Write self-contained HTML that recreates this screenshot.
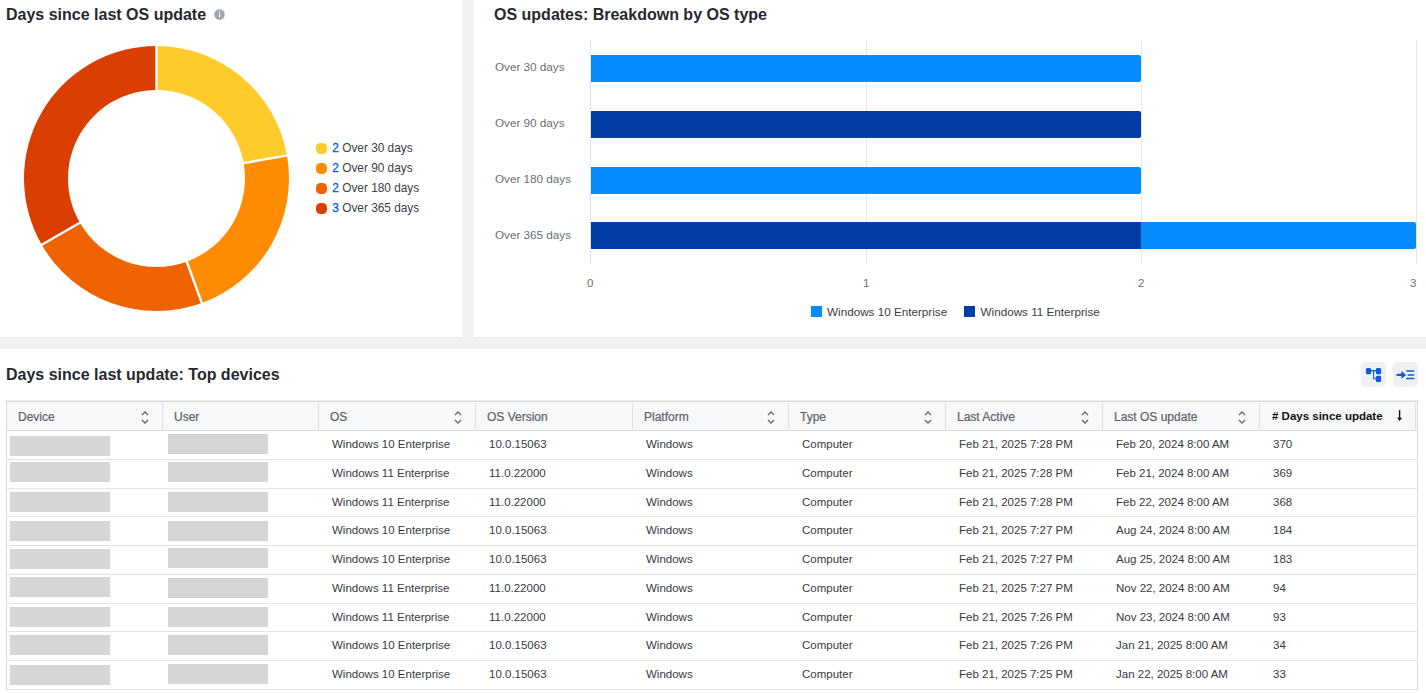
<!DOCTYPE html>
<html><head><meta charset="utf-8"><style>
*{box-sizing:border-box}
html,body{margin:0;padding:0;width:1426px;height:693px;overflow:hidden;background:#fff;font-family:"Liberation Sans",sans-serif}
.a,.abs{position:absolute}
.gray{background:#f0f1f3;position:absolute}
h2{margin:0;font-size:16px;font-weight:700;color:#26292e;position:absolute;white-space:nowrap;line-height:20px}
.leg{position:absolute;left:315.5px;padding-left:16.8px;font-size:11.85px;color:#3a3e45;line-height:20px;white-space:nowrap}
.leg .dot{position:absolute;left:0;top:4.6px;width:11.4px;height:11.4px;border-radius:4.5px}
.leg b{font-weight:400;color:#0b5cd5;-webkit-text-stroke:0.3px #0b5cd5}
.yl{position:absolute;left:495px;font-size:11.7px;color:#6a6f76;white-space:nowrap;line-height:14px}
.tk{position:absolute;top:276px;font-size:11.5px;color:#6a6f76;line-height:14px}
.bar{position:absolute;height:27.5px;border-radius:0 2px 2px 0}
.lb{background:#068cff}
.db{background:#003ea6}
.gl{position:absolute;top:40px;height:224px;width:1px;background:#e6e7eb}
.bl{position:absolute;top:304px;font-size:11.7px;color:#3a3e45;white-space:nowrap;line-height:16px}
.bl i{display:inline-block;width:11px;height:11px;vertical-align:-1px;margin-right:5.5px}
.th{font-size:12px;line-height:14px;color:#5c6168;white-space:nowrap;-webkit-text-stroke:0.2px #5c6168}
.th.act{color:#111;font-weight:700;font-size:11.5px;-webkit-text-stroke:0}
.td{font-size:11.5px;line-height:14px;color:#373a40;white-space:nowrap}
.ph{width:100px;height:20px;background:#d6d6d6}
.btn{position:absolute;top:362px;width:25px;height:25px;border-radius:5px;background:#eef0f3}
</style></head><body>
<div class="gray" style="left:462px;top:0;width:12px;height:337px"></div>
<div class="gray" style="left:0;top:337px;width:1426px;height:12px"></div>

<h2 style="left:6px;top:5px">Days since last OS update</h2>
<svg class="abs" style="left:214px;top:9px" width="11" height="11" viewBox="0 0 11 11"><circle cx="5.5" cy="5.5" r="5.3" fill="#a2a6ad"/><rect x="4.9" y="4.7" width="1.2" height="3.6" fill="#fff"/><circle cx="5.5" cy="3.2" r="0.75" fill="#fff"/></svg>
<svg class="abs" style="left:0;top:0" width="462" height="337"><path d="M156.50,46.00 A132.5,132.5 0 0 1 286.99,155.49 L243.66,163.13 A88.5,88.5 0 0 0 156.50,90.00 Z" fill="#FFCB2B"/>
<path d="M286.99,155.49 A132.5,132.5 0 0 1 201.82,303.01 L186.77,261.66 A88.5,88.5 0 0 0 243.66,163.13 Z" fill="#FF8C00"/>
<path d="M201.82,303.01 A132.5,132.5 0 0 1 41.75,244.75 L79.86,222.75 A88.5,88.5 0 0 0 186.77,261.66 Z" fill="#EE6300"/>
<path d="M41.75,244.75 A132.5,132.5 0 0 1 156.50,46.00 L156.50,90.00 A88.5,88.5 0 0 0 79.86,222.75 Z" fill="#DA3E00"/>
<line x1="156.50" y1="92.00" x2="156.50" y2="44.00" stroke="#fff" stroke-width="2.4"/>
<line x1="241.69" y1="163.48" x2="288.96" y2="155.14" stroke="#fff" stroke-width="2.4"/>
<line x1="186.08" y1="259.78" x2="202.50" y2="304.89" stroke="#fff" stroke-width="2.4"/>
<line x1="81.59" y1="221.75" x2="40.02" y2="245.75" stroke="#fff" stroke-width="2.4"/></svg>
<div class="leg" style="top:138.2px"><span class="dot" style="background:#FFCB2B"></span><b>2</b> Over 30 days</div>
<div class="leg" style="top:158.2px"><span class="dot" style="background:#FF8C00"></span><b>2</b> Over 90 days</div>
<div class="leg" style="top:178.2px"><span class="dot" style="background:#EE6300"></span><b>2</b> Over 180 days</div>
<div class="leg" style="top:198.2px"><span class="dot" style="background:#DA3E00"></span><b>3</b> Over 365 days</div>

<h2 style="left:494px;top:5px">OS updates: Breakdown by OS type</h2>
<div class="gl" style="left:590px;background:#dfe1e5"></div>
<div class="gl" style="left:866px"></div>
<div class="gl" style="left:1141px"></div>
<div class="gl" style="left:1416px"></div>
<div class="bar lb" style="left:591px;top:54.5px;width:550px"></div>
<div class="bar db" style="left:591px;top:110.5px;width:550px"></div>
<div class="bar lb" style="left:591px;top:166.5px;width:550px"></div>
<div class="bar db" style="left:591px;top:221.5px;width:550px;border-radius:0"></div>
<div class="bar lb" style="left:1141px;top:221.5px;width:275px"></div>
<div class="yl" style="top:59.5px">Over 30 days</div>
<div class="yl" style="top:115.5px">Over 90 days</div>
<div class="yl" style="top:171.5px">Over 180 days</div>
<div class="yl" style="top:227.5px">Over 365 days</div>
<div class="tk" style="left:587px">0</div>
<div class="tk" style="left:863px">1</div>
<div class="tk" style="left:1138px">2</div>
<div class="tk" style="left:1410px">3</div>
<div class="bl" style="left:810.5px"><i style="background:#068cff"></i>Windows 10 Enterprise</div>
<div class="bl" style="left:964px"><i style="background:#003ea6"></i>Windows 11 Enterprise</div>

<h2 style="left:6px;top:365px">Days since last update: Top devices</h2>
<div class="btn" style="left:1361px"></div>
<div class="btn" style="left:1392.5px;width:25.5px"></div>
<svg class="abs" style="left:1361px;top:362px" width="25" height="25" viewBox="1361 362 25 25"><rect x="1365.9" y="368.1" width="5.3" height="6.1" rx="1.5" fill="#0b5cd5"/><rect x="1375.8" y="368.1" width="5.3" height="6.1" rx="1.5" fill="#0b5cd5"/><rect x="1375.8" y="375.8" width="5.3" height="6.1" rx="1.5" fill="#0b5cd5"/><path d="M1371 370.6 H1376 M1373.6 370.6 V378.8 H1376" fill="none" stroke="#0b5cd5" stroke-width="1.1"/></svg>
<svg class="abs" style="left:1392px;top:362px" width="26" height="25" viewBox="1392 362 26 25"><path d="M1397.4 374.9 H1403" stroke="#0b5cd5" stroke-width="2.2" stroke-linecap="round"/><path d="M1401.4 371 L1406.2 374.9 L1401.4 378.8 Z" fill="#0b5cd5"/><path d="M1406.8 371 H1413.6 M1408.2 374.9 H1413.6 M1406.8 378.6 H1413.6" stroke="#0b5cd5" stroke-width="1.5" stroke-linecap="round"/></svg>
<div class="a" style="left:6px;top:400px;width:1412px;height:1px;background:#eceef1"></div>
<div class="a" style="left:6px;top:401px;width:1412px;height:1px;background:#d3d6db"></div>
<div class="a" style="left:6px;top:402px;width:1411px;height:28px;background:#f7f8fa"></div>
<div class="a" style="left:6px;top:401px;width:1px;height:289px;background:#d7dade"></div>
<div class="a" style="left:1417px;top:401px;width:1px;height:289px;background:#d7dade"></div>
<div class="a" style="left:7px;top:430px;width:1410px;height:1px;background:#d9dce0"></div>
<div class="a" style="left:7px;top:459px;width:1410px;height:1px;background:#e0e3e7"></div>
<div class="a" style="left:7px;top:488px;width:1410px;height:1px;background:#e0e3e7"></div>
<div class="a" style="left:7px;top:516px;width:1410px;height:1px;background:#e0e3e7"></div>
<div class="a" style="left:7px;top:545px;width:1410px;height:1px;background:#e0e3e7"></div>
<div class="a" style="left:7px;top:574px;width:1410px;height:1px;background:#e0e3e7"></div>
<div class="a" style="left:7px;top:603px;width:1410px;height:1px;background:#e0e3e7"></div>
<div class="a" style="left:7px;top:631px;width:1410px;height:1px;background:#e0e3e7"></div>
<div class="a" style="left:7px;top:660px;width:1410px;height:1px;background:#e0e3e7"></div>
<div class="a" style="left:7px;top:689px;width:1410px;height:1px;background:#e0e3e7"></div>
<div class="a" style="left:162px;top:403px;width:1px;height:26px;background:#dcdfe3"></div>
<div class="a" style="left:318px;top:403px;width:1px;height:26px;background:#dcdfe3"></div>
<div class="a" style="left:475px;top:403px;width:1px;height:26px;background:#dcdfe3"></div>
<div class="a" style="left:632px;top:403px;width:1px;height:26px;background:#dcdfe3"></div>
<div class="a" style="left:788px;top:403px;width:1px;height:26px;background:#dcdfe3"></div>
<div class="a" style="left:945px;top:403px;width:1px;height:26px;background:#dcdfe3"></div>
<div class="a" style="left:1102px;top:403px;width:1px;height:26px;background:#dcdfe3"></div>
<div class="a" style="left:1259px;top:403px;width:1px;height:26px;background:#dcdfe3"></div>
<div class="a" style="left:1415px;top:403px;width:1px;height:26px;background:#dcdfe3"></div>
<div class="a th" style="left:18px;top:409.6px">Device</div>
<svg class="a" style="left:140.5px;top:411px" width="8" height="13" viewBox="0 0 8 13"><path d="M1 4 L4 1 L7 4 M1 9 L4 12 L7 9" fill="none" stroke="#60656c" stroke-width="1.25"/></svg>
<div class="a th" style="left:174px;top:409.6px">User</div>
<div class="a th" style="left:330px;top:409.6px">OS</div>
<svg class="a" style="left:453.5px;top:411px" width="8" height="13" viewBox="0 0 8 13"><path d="M1 4 L4 1 L7 4 M1 9 L4 12 L7 9" fill="none" stroke="#60656c" stroke-width="1.25"/></svg>
<div class="a th" style="left:487px;top:409.6px">OS Version</div>
<div class="a th" style="left:644px;top:409.6px">Platform</div>
<svg class="a" style="left:766.5px;top:411px" width="8" height="13" viewBox="0 0 8 13"><path d="M1 4 L4 1 L7 4 M1 9 L4 12 L7 9" fill="none" stroke="#60656c" stroke-width="1.25"/></svg>
<div class="a th" style="left:800px;top:409.6px">Type</div>
<svg class="a" style="left:923.5px;top:411px" width="8" height="13" viewBox="0 0 8 13"><path d="M1 4 L4 1 L7 4 M1 9 L4 12 L7 9" fill="none" stroke="#60656c" stroke-width="1.25"/></svg>
<div class="a th" style="left:957px;top:409.6px">Last Active</div>
<svg class="a" style="left:1080.5px;top:411px" width="8" height="13" viewBox="0 0 8 13"><path d="M1 4 L4 1 L7 4 M1 9 L4 12 L7 9" fill="none" stroke="#60656c" stroke-width="1.25"/></svg>
<div class="a th" style="left:1114px;top:409.6px">Last OS update</div>
<svg class="a" style="left:1237.5px;top:411px" width="8" height="13" viewBox="0 0 8 13"><path d="M1 4 L4 1 L7 4 M1 9 L4 12 L7 9" fill="none" stroke="#60656c" stroke-width="1.25"/></svg>
<div class="a th act" style="left:1272px;top:409.4px"># Days since update</div>
<svg class="a" style="left:1395px;top:408px" width="10" height="15" viewBox="0 0 10 15"><path d="M4.6 2 V11" stroke="#111" stroke-width="1.4"/><path d="M2.1 9.8 H7.1 L4.6 13 Z" fill="#111"/></svg>
<div class="a ph" style="left:10px;top:436px"></div>
<div class="a ph" style="left:168px;top:434px"></div>
<div class="a td" style="left:332px;top:437.4px">Windows 10 Enterprise</div>
<div class="a td" style="left:489px;top:437.4px">10.0.15063</div>
<div class="a td" style="left:646px;top:437.4px">Windows</div>
<div class="a td" style="left:802px;top:437.4px">Computer</div>
<div class="a td" style="left:959px;top:437.4px">Feb 21, 2025 7:28 PM</div>
<div class="a td" style="left:1116px;top:437.4px">Feb 20, 2024 8:00 AM</div>
<div class="a td" style="left:1273px;top:437.4px">370</div>
<div class="a ph" style="left:10px;top:462px"></div>
<div class="a ph" style="left:168px;top:462px"></div>
<div class="a td" style="left:332px;top:466.1px">Windows 11 Enterprise</div>
<div class="a td" style="left:489px;top:466.1px">11.0.22000</div>
<div class="a td" style="left:646px;top:466.1px">Windows</div>
<div class="a td" style="left:802px;top:466.1px">Computer</div>
<div class="a td" style="left:959px;top:466.1px">Feb 21, 2025 7:28 PM</div>
<div class="a td" style="left:1116px;top:466.1px">Feb 21, 2024 8:00 AM</div>
<div class="a td" style="left:1273px;top:466.1px">369</div>
<div class="a ph" style="left:10px;top:492px"></div>
<div class="a ph" style="left:168px;top:492px"></div>
<div class="a td" style="left:332px;top:494.5px">Windows 11 Enterprise</div>
<div class="a td" style="left:489px;top:494.5px">11.0.22000</div>
<div class="a td" style="left:646px;top:494.5px">Windows</div>
<div class="a td" style="left:802px;top:494.5px">Computer</div>
<div class="a td" style="left:959px;top:494.5px">Feb 21, 2025 7:28 PM</div>
<div class="a td" style="left:1116px;top:494.5px">Feb 22, 2024 8:00 AM</div>
<div class="a td" style="left:1273px;top:494.5px">368</div>
<div class="a ph" style="left:10px;top:521px"></div>
<div class="a ph" style="left:168px;top:521px"></div>
<div class="a td" style="left:332px;top:523.2px">Windows 10 Enterprise</div>
<div class="a td" style="left:489px;top:523.2px">10.0.15063</div>
<div class="a td" style="left:646px;top:523.2px">Windows</div>
<div class="a td" style="left:802px;top:523.2px">Computer</div>
<div class="a td" style="left:959px;top:523.2px">Feb 21, 2025 7:27 PM</div>
<div class="a td" style="left:1116px;top:523.2px">Aug 24, 2024 8:00 AM</div>
<div class="a td" style="left:1273px;top:523.2px">184</div>
<div class="a ph" style="left:10px;top:549px"></div>
<div class="a ph" style="left:168px;top:548px"></div>
<div class="a td" style="left:332px;top:552.0px">Windows 10 Enterprise</div>
<div class="a td" style="left:489px;top:552.0px">10.0.15063</div>
<div class="a td" style="left:646px;top:552.0px">Windows</div>
<div class="a td" style="left:802px;top:552.0px">Computer</div>
<div class="a td" style="left:959px;top:552.0px">Feb 21, 2025 7:27 PM</div>
<div class="a td" style="left:1116px;top:552.0px">Aug 25, 2024 8:00 AM</div>
<div class="a td" style="left:1273px;top:552.0px">183</div>
<div class="a ph" style="left:10px;top:577px"></div>
<div class="a ph" style="left:168px;top:578px"></div>
<div class="a td" style="left:332px;top:581.1px">Windows 11 Enterprise</div>
<div class="a td" style="left:489px;top:581.1px">11.0.22000</div>
<div class="a td" style="left:646px;top:581.1px">Windows</div>
<div class="a td" style="left:802px;top:581.1px">Computer</div>
<div class="a td" style="left:959px;top:581.1px">Feb 21, 2025 7:27 PM</div>
<div class="a td" style="left:1116px;top:581.1px">Nov 22, 2024 8:00 AM</div>
<div class="a td" style="left:1273px;top:581.1px">94</div>
<div class="a ph" style="left:10px;top:607px"></div>
<div class="a ph" style="left:168px;top:607px"></div>
<div class="a td" style="left:332px;top:609.7px">Windows 11 Enterprise</div>
<div class="a td" style="left:489px;top:609.7px">11.0.22000</div>
<div class="a td" style="left:646px;top:609.7px">Windows</div>
<div class="a td" style="left:802px;top:609.7px">Computer</div>
<div class="a td" style="left:959px;top:609.7px">Feb 21, 2025 7:26 PM</div>
<div class="a td" style="left:1116px;top:609.7px">Nov 23, 2024 8:00 AM</div>
<div class="a td" style="left:1273px;top:609.7px">93</div>
<div class="a ph" style="left:10px;top:635px"></div>
<div class="a ph" style="left:168px;top:635px"></div>
<div class="a td" style="left:332px;top:638.0px">Windows 10 Enterprise</div>
<div class="a td" style="left:489px;top:638.0px">10.0.15063</div>
<div class="a td" style="left:646px;top:638.0px">Windows</div>
<div class="a td" style="left:802px;top:638.0px">Computer</div>
<div class="a td" style="left:959px;top:638.0px">Feb 21, 2025 7:26 PM</div>
<div class="a td" style="left:1116px;top:638.0px">Jan 21, 2025 8:00 AM</div>
<div class="a td" style="left:1273px;top:638.0px">34</div>
<div class="a ph" style="left:10px;top:665px"></div>
<div class="a ph" style="left:168px;top:664px"></div>
<div class="a td" style="left:332px;top:667.2px">Windows 10 Enterprise</div>
<div class="a td" style="left:489px;top:667.2px">10.0.15063</div>
<div class="a td" style="left:646px;top:667.2px">Windows</div>
<div class="a td" style="left:802px;top:667.2px">Computer</div>
<div class="a td" style="left:959px;top:667.2px">Feb 21, 2025 7:25 PM</div>
<div class="a td" style="left:1116px;top:667.2px">Jan 22, 2025 8:00 AM</div>
<div class="a td" style="left:1273px;top:667.2px">33</div>
</body></html>
